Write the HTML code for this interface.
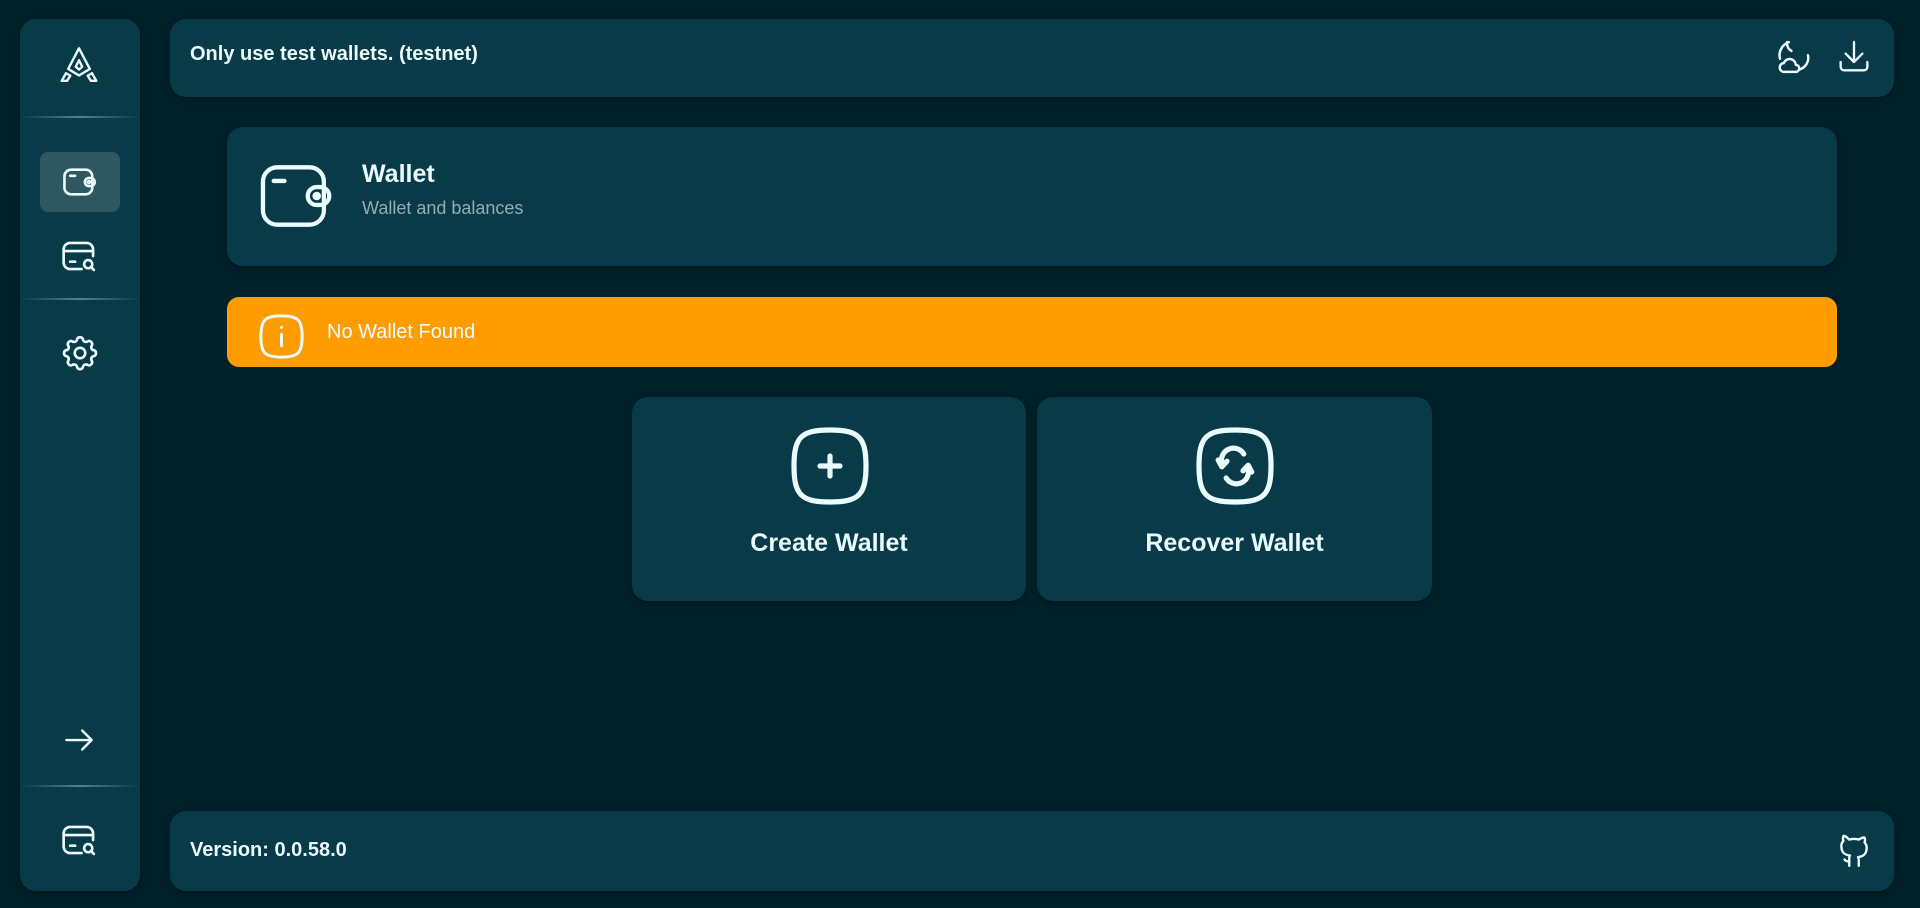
<!DOCTYPE html>
<html><head><meta charset="utf-8"><style>
*{box-sizing:border-box;margin:0;padding:0}
body{width:1920px;height:908px;background:#00212a;font-family:"Liberation Sans",sans-serif;color:#eafcff;position:relative;overflow:hidden}
.p{position:absolute;background:#093a47;border-radius:16px;box-shadow:0 2px 6px rgba(0,0,0,.35)}
.ic{position:absolute;fill:none;stroke:#eafcff;stroke-linecap:round;stroke-linejoin:round}
.hr{position:absolute;left:20px;width:120px;height:2px;background:linear-gradient(90deg,rgba(120,160,165,0),rgba(120,160,165,.7),rgba(120,160,165,0))}
.t{position:absolute;white-space:nowrap}
</style></head><body>
<div class="p" style="left:20px;top:19px;width:120px;height:872px"></div>
<svg class="ic" style="left:53px;top:44px" width="52" height="52" viewBox="0 0 24 24" stroke-width="1.1"><path d="M12 2L7 11.5L12 14.5L17 11.5Z"/><path d="M12 7.5L10.5 10.5L12 11.8L13.5 10.5Z"/><path d="M6 13.5L4 17H6.5L8 14.6Z"/><path d="M18 13.5L20 17H17.5L16 14.6Z"/></svg>
<div class="hr" style="top:116px"></div>
<div style="position:absolute;left:40px;top:152px;width:80px;height:60px;background:#2e5760;border-radius:8px"></div>
<svg class="ic" style="left:60px;top:164px" width="40" height="36" viewBox="0 0 24 22" stroke-width="1.6"><rect x="2.5" y="3.5" width="17" height="15" rx="4"/><rect x="15" y="8.5" width="6" height="5" rx="2.5"/><circle cx="17.5" cy="11" r=".6"/><path d="M6 7.2h3"/></svg>
<svg class="ic" style="left:60px;top:238px" width="40" height="36" viewBox="0 0 24 22" stroke-width="1.6"><path d="M20 11V7a4 4 0 0 0-4-4H6a4 4 0 0 0-4 4v8a4 4 0 0 0 4 4h7M2 8h18M6 14.5h3"/><circle cx="17" cy="16" r="2.5"/><path d="M19 18l1.5 1.5"/></svg>
<div class="hr" style="top:298px"></div>
<svg class="ic" style="left:59px;top:332px" width="42" height="42" viewBox="0 0 24 24" stroke-width="1.5"><path d="M10.3 4.3c.4-1.8 3-1.8 3.4 0a1.7 1.7 0 0 0 2.6 1.1c1.5-.9 3.3.8 2.4 2.4a1.7 1.7 0 0 0 1.100 2.6c1.8.4 1.8 3 0 3.4a1.7 1.7 0 0 0-1.1 2.6c.9 1.5-.8 3.3-2.4 2.4a1.7 1.7 0 0 0-2.6 1.1c-.4 1.8-3 1.8-3.4 0a1.7 1.7 0 0 0-2.6-1.1c-1.5.9-3.3-.8-2.4-2.4a1.7 1.7 0 0 0-1.1-2.6c-1.8-.4-1.8-3 0-3.4a1.7 1.7 0 0 0 1.1-2.6c-.9-1.5.8-3.3 2.4-2.4 1 .6 2.3.1 2.6-1.1z"/><circle cx="12" cy="12" r="3"/></svg>
<svg class="ic" style="left:60px;top:721px" width="38" height="38" viewBox="0 0 24 24" stroke-width="1.5"><path d="M4 12h16M14 6l6 6-6 6"/></svg>
<div class="hr" style="top:785px"></div>
<svg class="ic" style="left:60px;top:822px" width="40" height="36" viewBox="0 0 24 22" stroke-width="1.6"><path d="M20 11V7a4 4 0 0 0-4-4H6a4 4 0 0 0-4 4v8a4 4 0 0 0 4 4h7M2 8h18M6 14.5h3"/><circle cx="17" cy="16" r="2.5"/><path d="M19 18l1.5 1.5"/></svg>

<div class="p" style="left:170px;top:19px;width:1724px;height:78px"></div>
<div class="t" style="left:190px;top:43px;font-size:20px;font-weight:bold">Only use test wallets. (testnet)</div>
<svg class="ic" style="left:1773px;top:36px" width="42" height="42" viewBox="0 0 24 24" stroke-width="1.4"><path d="M9 3.5A8 8 0 0 0 4 13M8 3.5a5 5 0 0 0 2.5 5"/><path d="M6.5 20.5a2.5 2.5 0 0 1-.3-5 3.5 3.5 0 0 1 6.8 1 2 2 0 0 1 0 4z"/><path d="M20 11a7 7 0 0 1-4.5 8"/></svg>
<svg class="ic" style="left:1834px;top:37px" width="40" height="40" viewBox="0 0 24 24" stroke-width="1.4"><path d="M4 15v3a2 2 0 0 0 2 2h12a2 2 0 0 0 2-2v-3M7 10l5 5 5-5M12 3v12"/></svg>

<div class="p" style="left:227px;top:127px;width:1610px;height:139px"></div>
<svg class="ic" style="left:254px;top:156px" width="86" height="80" viewBox="0 0 24 22" stroke-width="1.2"><rect x="2.5" y="3" width="17" height="16" rx="4"/><rect x="15" y="8.5" width="6" height="5" rx="2.5"/><circle cx="17.5" cy="11" r=".6"/><path d="M5.5 6.8h3"/></svg>
<div class="t" style="left:362px;top:160px;font-size:25px;font-weight:bold">Wallet</div>
<div class="t" style="left:362px;top:198px;font-size:18px;color:#93aeb3">Wallet and balances</div>

<div style="position:absolute;left:227px;top:297px;width:1610px;height:70px;background:#ff9c00;border-radius:12px"></div>
<svg class="ic" style="left:254px;top:309px" width="55" height="55" viewBox="0 0 24 24" stroke-width="1.3"><path d="M12 3c7.2 0 9 1.8 9 9s-1.8 9-9 9-9-1.8-9-9 1.8-9 9-9z"/><path d="M12 8v.01M12 11v5"/></svg>
<div class="t" style="left:327px;top:321px;font-size:20px">No Wallet Found</div>

<div class="p" style="left:632px;top:397px;width:394px;height:204px"></div>
<div class="p" style="left:1037px;top:397px;width:395px;height:204px"></div>
<svg class="ic" style="left:782px;top:418px" width="96" height="96" viewBox="0 0 24 24" stroke-width="1.3"><path d="M12 3c7.2 0 9 1.8 9 9s-1.8 9-9 9-9-1.8-9-9 1.8-9 9-9z"/><path d="M9.5 12h5M12 9.5v5"/></svg>
<svg class="ic" style="left:1187px;top:418px" width="96" height="96" viewBox="0 0 24 24" stroke-width="1.3"><path d="M12 3c7.2 0 9 1.8 9 9s-1.8 9-9 9-9-1.8-9-9 1.8-9 9-9z"/><path d="M14.2 9a3 3 0 0 0-5.5 2.2M9.8 15a3 3 0 0 0 5.5-2.2"/><path d="M7.8 10.5l.9 1.7 1.3-1.4M16.2 13.5l-.9-1.7-1.3 1.4" fill="#eafcff"/></svg>
<div class="t" style="left:632px;width:394px;text-align:center;top:529px;font-size:25px;font-weight:bold">Create Wallet</div>
<div class="t" style="left:1037px;width:395px;text-align:center;top:529px;font-size:25px;font-weight:bold">Recover Wallet</div>

<div class="p" style="left:170px;top:811px;width:1724px;height:80px"></div>
<div class="t" style="left:190px;top:839px;font-size:20px;font-weight:bold">Version: 0.0.58.0</div>
<svg class="ic" style="left:1835px;top:831px" width="38" height="38" viewBox="0 0 24 24" stroke-width="1.5"><path d="M9 19c-2 .6-2.5-.5-3-1m9 4v-3.5c0-1 .1-1.4-.5-2 2.8-.3 5.5-1.4 5.5-6a4.6 4.6 0 0 0-1.3-3.2 4.2 4.2 0 0 0-.1-3.2s-1.1-.3-3.5 1.3a12.3 12.3 0 0 0-6.2 0C6.5 2.8 5.4 3.1 5.4 3.1a4.2 4.2 0 0 0-.1 3.2A4.6 4.6 0 0 0 4 9.5c0 4.6 2.7 5.7 5.5 6-.6.6-.6 1.2-.5 2V22"/></svg>
</body></html>
